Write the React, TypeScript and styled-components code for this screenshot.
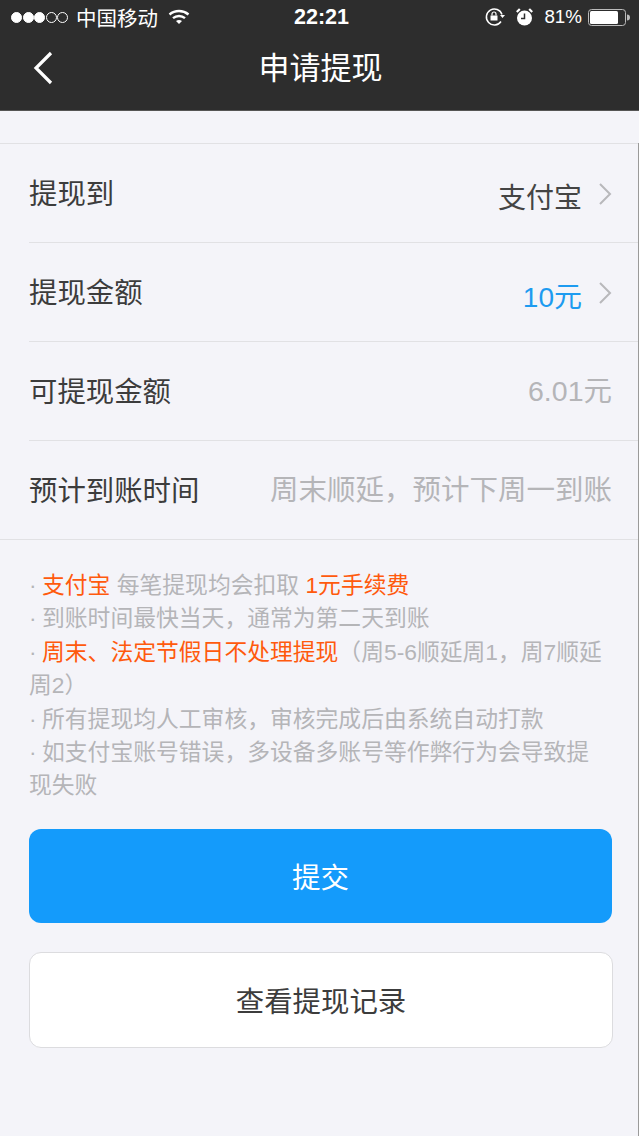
import styled, { createGlobalStyle } from "styled-components";

const FONT = `"Liberation Sans", "Noto Sans CJK SC", sans-serif`;

const GlobalStyle = createGlobalStyle`
  html, body {
    margin: 0;
    padding: 0;
    background: #f4f4f9;
  }
  * {
    box-sizing: border-box;
  }
`;

const Page = styled.div`
  width: 639px;
  height: 1136px;
  overflow: hidden;
  background: #f4f4f9;
  font-family: ${FONT};
`;

const Header = styled.header`
  height: 111px;
  background: #2d2d2d;
  border-bottom: 1px solid #555;
  color: #fff;
`;

const StatusBar = styled.div`
  height: 34px;
  display: flex;
  align-items: center;
  justify-content: space-between;
  padding: 0 9px 0 11px;
  font-size: 20.5px;
`;

const StatusGroup = styled.div`
  display: flex;
  align-items: center;
  gap: 8px;
  width: 220px;
`;

const StatusRight = styled(StatusGroup)`
  justify-content: flex-end;
  gap: 11px;
`;

const Signal = styled.div`
  display: flex;
  gap: 0.5px;
`;

const Dot = styled.span<{ $on: boolean }>`
  width: 11px;
  height: 11px;
  border-radius: 50%;
  border: 1px solid #fff;
  background: ${({ $on }) => ($on ? "#fff" : "transparent")};
`;

const Wifi = styled.svg`
  margin-left: 2px;
`;

const Clock = styled.div`
  font-size: 21.5px;
  font-weight: 700;
  padding-left: 2px;
`;

const Percent = styled.span`
  font-size: 18.8px;
  margin-right: -5px;
`;

const NavBar = styled.div`
  position: relative;
  height: 62px;
  display: flex;
  align-items: center;
  justify-content: center;
  font-size: 31px;
  padding-left: 2px;
`;

const Back = styled.svg`
  position: absolute;
  left: 32px;
  top: 17px;
`;

const Content = styled.main`
  height: 1025px;
  border-right: 1px solid #9a9a9a;
`;

const Rows = styled.section`
  margin-top: 32px;
  border-top: 1px solid #e1e1e4;
  border-bottom: 1px solid #e1e1e4;
`;

const Row = styled.div`
  height: 99px;
  margin-left: 29px;
  padding: 0 26px 3px 0;
  display: flex;
  align-items: center;
  justify-content: space-between;
  border-bottom: 1px solid #e1e1e4;
  &:last-child {
    height: 98px;
    border-bottom: none;
  }
`;

const Label = styled.span`
  font-size: 28.4px;
  color: #3c3c3c;
`;

const LinkValue = styled.span<{ $color: string }>`
  display: flex;
  align-items: center;
  gap: 16px;
  font-size: 28px;
  color: ${({ $color }) => $color};
`;

const LinkText = styled.span`
  margin-top: 8px;
`;

const ChevronIcon = styled.svg`
  margin-top: 4px;
`;

const PlainValue = styled.span`
  margin-bottom: 2px;
  font-size: 28.5px;
  color: #b5b5b8;
`;

const Notes = styled.div`
  padding: 29px 28px 0 29px;
  font-size: 22.8px;
  line-height: 33.4px;
  color: #b5b5b8;
`;

const Bullet = styled.span`
  display: inline-block;
  width: 13px;
`;

const Hot = styled.span`
  color: #ff5a0d;
`;

const Actions = styled.div`
  margin-top: 26px;
  padding: 0 25px 0 29px;
  display: flex;
  flex-direction: column;
  gap: 29px;
`;

const Submit = styled.button`
  height: 94px;
  margin-right: 1px;
  border: none;
  border-radius: 12px;
  background: #149bfb;
  color: #fff;
  font: 28.5px ${FONT};
`;

const History = styled.button`
  height: 96px;
  border: 1px solid #dcdcdf;
  border-radius: 12px;
  background: #fff;
  color: #3c3c3c;
  font: 28.4px ${FONT};
`;

const Chevron = () => (
  <ChevronIcon width="14" height="24" viewBox="0 0 14 24" fill="none">
    <path d="M2 2l10 10L2 22" stroke="#b8b8bb" strokeWidth="2" />
  </ChevronIcon>
);

export default function App() {
  return (
    <Page>
      <GlobalStyle />
      <Header>
        <StatusBar>
          <StatusGroup>
            <Signal>
              {[true, true, true, false, false].map((on, i) => (
                <Dot $on={on} key={i} />
              ))}
            </Signal>
            <span>中国移动</span>
            <Wifi width="22" height="16" viewBox="0 0 22 16" fill="none" stroke="#fff" strokeWidth="2.4">
              <path d="M1.5 5.5c5.5-4.600 13.500-4.600 19 0" />
              <path d="M5 9.200c3.500-3 8.500-3 12 0" />
              <path d="M11 15l-3-3c1.800-1.400 4.200-1.400 6 0z" fill="#fff" stroke="none" />
            </Wifi>
          </StatusGroup>
          <Clock>22:21</Clock>
          <StatusRight>
            <svg width="20" height="20" viewBox="0 0 20 20" fill="none" stroke="#fff" strokeWidth="1.5">
              <path d="M16 14.500A8 8 0 1 1 17 7.500" />
              <path d="M15 8h5l-2.500 3z" fill="#fff" stroke="none" />
              <rect x="5.500" y="8.500" width="7" height="5" fill="#fff" stroke="none" />
              <path d="M7 8.500V7a2 2 0 0 1 4 0v1.500" strokeWidth="1.200" />
            </svg>
            <svg width="17" height="18" viewBox="0 0 17 18">
              <circle cx="8.500" cy="10" r="7.500" fill="#fff" />
              <path d="M8.500 5.500V10.500H5" stroke="#2d2d2d" strokeWidth="1.500" fill="none" />
              <path d="M.8 4l3-3M16.200 4l-3-3" stroke="#fff" strokeWidth="2.200" />
            </svg>
            <Percent>81%</Percent>
            <svg width="42" height="17" viewBox="0 0 42 17">
              <rect x="0.500" y="0.500" width="37" height="16" rx="3" fill="none" stroke="#bbb" />
              <rect x="2" y="2" width="28" height="13" rx="1.500" fill="#fff" />
              <path d="M39 5.500c2 0 3 1 3 3s-1 3-3 3z" fill="#bbb" />
            </svg>
          </StatusRight>
        </StatusBar>
        <NavBar>
          <Back width="22" height="34" viewBox="0 0 22 34" fill="none">
            <path d="M19 2L4 17l15 15" stroke="#fff" strokeWidth="3.200" />
          </Back>
          申请提现
        </NavBar>
      </Header>
      <Content>
        <Rows>
          <Row>
            <Label>提现到</Label>
            <LinkValue $color="#444">
              <LinkText>支付宝</LinkText>
              <Chevron />
            </LinkValue>
          </Row>
          <Row>
            <Label>提现金额</Label>
            <LinkValue $color="#1d9bf0">
              <LinkText>10元</LinkText>
              <Chevron />
            </LinkValue>
          </Row>
          <Row>
            <Label>可提现金额</Label>
            <PlainValue>6.01元</PlainValue>
          </Row>
          <Row>
            <Label>预计到账时间</Label>
            <PlainValue>周末顺延，预计下周一到账</PlainValue>
          </Row>
        </Rows>
        <Notes>
          <Bullet>·</Bullet>
          <Hot>支付宝</Hot> 每笔提现均会扣取 <Hot>1元手续费</Hot>
          <br />
          <Bullet>·</Bullet>到账时间最快当天，通常为第二天到账
          <br />
          <Bullet>·</Bullet>
          <Hot>周末、法定节假日不处理提现</Hot>（周5-6顺延周1，周7顺延周2）
          <br />
          <Bullet>·</Bullet>所有提现均人工审核，审核完成后由系统自动打款
          <br />
          <Bullet>·</Bullet>如支付宝账号错误，多设备多账号等作弊行为会导致提现失败
        </Notes>
        <Actions>
          <Submit>提交</Submit>
          <History>查看提现记录</History>
        </Actions>
      </Content>
    </Page>
  );
}
